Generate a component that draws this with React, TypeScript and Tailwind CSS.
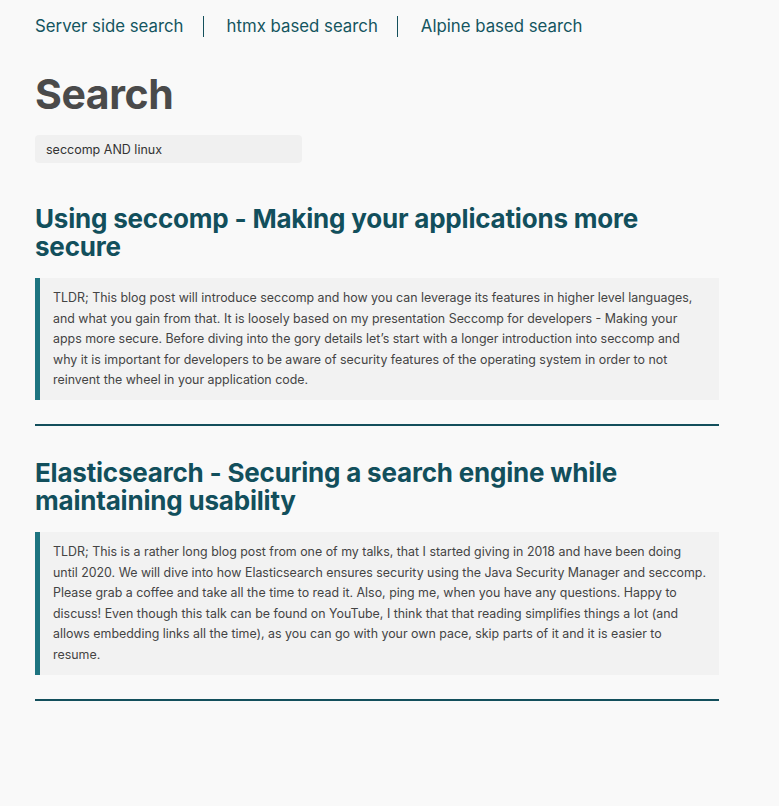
import React from 'react';

const posts = [
  {
    title: 'Using seccomp - Making your applications more secure',
    summary:
      'TLDR; This blog post will introduce seccomp and how you can leverage its features in higher level languages, and what you gain from that. It is loosely based on my presentation Seccomp for developers - Making your apps more secure. Before diving into the gory details let\u2019s start with a longer introduction into seccomp and why it is important for developers to be aware of security features of the operating system in order to not reinvent the wheel in your application code.',
  },
  {
    title: 'Elasticsearch - Securing a search engine while maintaining usability',
    summary:
      'TLDR; This is a rather long blog post from one of my talks, that I started giving in 2018 and have been doing until 2020. We will dive into how Elasticsearch ensures security using the Java Security Manager and seccomp. Please grab a coffee and take all the time to read it. Also, ping me, when you have any questions. Happy to discuss! Even though this talk can be found on YouTube, I think that that reading simplifies things a lot (and allows embedding links all the time), as you can go with your own pace, skip parts of it and it is easier to resume.',
  },
];

const links = ['Server side search', 'htmx based search', 'Alpine based search'];

export default function App() {
  return (
    <div className="min-h-screen bg-[#f9f9f9] font-['Inter',sans-serif]">
      <div className="w-[684px] ml-[35px] pt-[14px] pb-20">
        {/* nav */}
        <nav className="flex items-center text-[16.8px] text-[#14555f]">
          {links.map((l, i) => (
            <React.Fragment key={l}>
              {i > 0 && <span className="w-px h-[21px] bg-[#14505c] ml-[19px] mr-[23px]" />}
              <a href="#" className="leading-[24px]">{l}</a>
            </React.Fragment>
          ))}
        </nav>

        <h1 className="mt-[32px] text-[41px] leading-[48px] font-bold text-[#4a4a4a] tracking-[-0.4px]">Search</h1>

        <input
          className="mt-[17px] w-[267px] h-[28px] rounded-[4px] bg-[#f0f0f0] px-[11px] text-[12.5px] text-[#333] outline-none font-['Inter',sans-serif]"
          defaultValue="seccomp AND linux"
        />

        {posts.map((p, i) => (
          <div key={p.title}>
            <h2 className={`${i === 0 ? 'mt-[42px]' : 'mt-[33px]'} text-[26px] leading-[28px] font-bold text-[#124f5c] tracking-[-0.2px]`}>{p.title}</h2>
            <blockquote className="mt-[17px] border-l-[5px] border-[#1e7480] bg-[#f2f2f2] pl-[13px] pr-[12px] pt-[10px] pb-[9px] font-['Inter',sans-serif] text-[12.4px] leading-[20.6px] text-[#444]">
              {p.summary}
            </blockquote>
            <hr className="mt-[24px] border-0 h-[2px] bg-[#134f5c]" />
          </div>
        ))}
      </div>
    </div>
  );
}
